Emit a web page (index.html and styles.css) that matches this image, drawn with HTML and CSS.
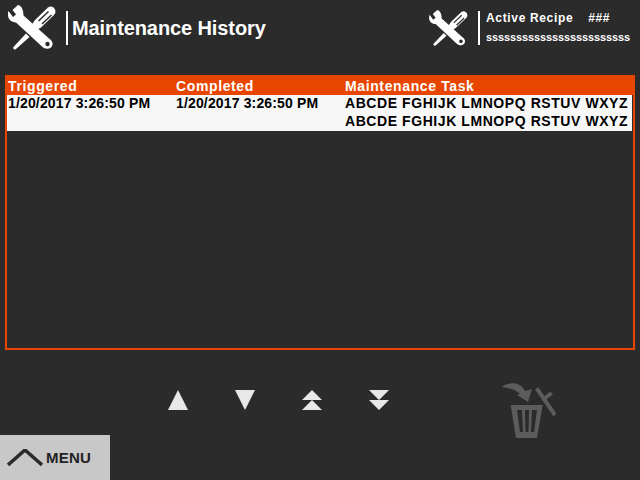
FILE: index.html
```html
<!DOCTYPE html>
<html lang="en">
<head>
    <meta charset="UTF-8">
    <title>Maintenance History</title>
    <link rel="stylesheet" href="styles.css">
</head>
<body>
    <svg class="icon-defs" width="0" height="0">
        <symbol id="tools" viewBox="8 5 48 46">
            <path class="tool" d="M18 5 L12.5 10 L16 14.500 L13 17 L8.500 11 C6.500 17 9.500 22 16 22.500 L42 46.500 C45 50 52 49.500 52.500 44.500 C53 42 51 40 49 38.500 L23.500 15.500 C23.500 9 21 5.500 18 5 Z"/>
            <circle class="hole" cx="47.500" cy="44" r="2.200"/>
            <path class="tool" d="M26 33.500 L29.500 37 L16 49 C14.500 50.500 12.500 48.500 13.500 47 Z"/>
            <path class="tool" d="M29.500 28 L35 20 L48 7.500 C50 6 52 6 54 8 C56 10.500 56 12.500 54 15 L41 27.500 L33 32 Z"/>
            <path class="slot" d="M38.500 21 L48.500 11.500 M42 24 L51.500 15"/>
        </symbol>
    </svg>

    <div class="header">
        <svg class="tools-big"><use href="#tools"/></svg>
        <div class="title">Maintenance History</div>
        <div class="recipe-box">
            <svg class="tools-small"><use href="#tools"/></svg>
            <div class="recipe">
                <div class="recipe-top"><span>Active Recipe</span><span>###</span></div>
                <div class="recipe-name">ssssssssssssssssssssssss</div>
            </div>
        </div>
    </div>

    <div class="history">
        <div class="row head">
            <div>Triggered</div>
            <div>Completed</div>
            <div>Maintenance Task</div>
        </div>
        <div class="row item">
            <div>1/20/2017 3:26:50 PM</div>
            <div>1/20/2017 3:26:50 PM</div>
            <div class="task">ABCDE FGHIJK LMNOPQ RSTUV WXYZ<br>ABCDE FGHIJK LMNOPQ RSTUV WXYZ</div>
        </div>
    </div>

    <div class="controls">
        <svg class="arrow" viewBox="0 0 20 20"><path d="M10 0 L20 20 L0 20 Z"/></svg>
        <svg class="arrow" viewBox="0 0 20 20"><path d="M0 0 L20 0 L10 20 Z"/></svg>
        <svg class="arrow" viewBox="0 0 20 20"><path d="M10 0 L20 10 L0 10 Z M10 10 L20 20 L0 20 Z"/></svg>
        <svg class="arrow" viewBox="0 0 20 20"><path d="M0 0 L20 0 L10 10 Z M0 10 L20 10 L10 20 Z"/></svg>
        <svg class="trash" viewBox="0 0 56 56">
            <path class="trash-fill" d="M1.700 5 C8 0 20 -1 25 9 L32 7 L28 20 L17 13 L20 12 C16 8 10 6 1.700 5 Z"/>
            <path class="trash-line" d="M36.700 6.300 L55 33 M45 16 L51.700 11"/>
            <path class="trash-fill" fill-rule="evenodd" d="M10.700 23 L42.700 23 L37 56 L16 56 Z M17 28 L20 50 L23 50 L22 28 Z M25 28 L25.500 50 L28.500 50 L29 28 Z M32 28 L31 50 L34 50 L37 28 Z"/>
        </svg>
    </div>

    <div class="menu">
        <svg class="menu-chevron" viewBox="0 0 36 18"><path d="M1 16 L18 1 L35 16"/></svg>
        <span>MENU</span>
    </div>
</body>
</html>
```

FILE: styles.css
```css
* {
    margin: 0;
    padding: 0;
    box-sizing: border-box;
    font-family: 'Liberation Sans', Arial, sans-serif;
}

body {
    width: 640px;
    height: 480px;
    background: #2b2b2b;
    overflow: hidden;
}

.icon-defs {
    position: absolute;
}

.tool {
    fill: #fff;
}

.hole {
    fill: #2b2b2b;
}

.slot {
    fill: none;
    stroke: #2b2b2b;
    stroke-width: 1.5;
}

.header {
    display: flex;
    align-items: flex-start;
    height: 75px;
    padding: 5px 10px 0 8px;
    color: #fff;
}

.tools-big {
    width: 48px;
    height: 46px;
}

.title {
    margin: 6px 0 0 10px;
    padding-left: 4px;
    height: 34px;
    border-left: 2px solid #fff;
    font-size: 20px;
    font-weight: bold;
    letter-spacing: -0.1px;
    line-height: 34px;
}

.recipe-box {
    display: flex;
    margin-left: auto;
}

.tools-small {
    width: 39px;
    height: 37px;
    margin-top: 5px;
}

.recipe {
    margin: 6px 0 0 10px;
    padding-left: 6px;
    height: 34px;
    border-left: 2px solid #fff;
}

.recipe-top {
    display: flex;
    gap: 15px;
    font-size: 12px;
    font-weight: bold;
    letter-spacing: 0.65px;
    line-height: 15px;
}

.recipe-name {
    margin-top: 4px;
    font-size: 11px;
    font-weight: bold;
    letter-spacing: -0.12px;
    line-height: 14px;
}

.history {
    height: 275px;
    margin: 0 5px;
    border: 2px solid #e84600;
}

.row {
    display: grid;
    grid-template-columns: 168px 169px 1fr;
    padding-left: 1px;
    font-weight: bold;
}

.head {
    height: 18px;
    background: #e84600;
    color: #fff;
    font-size: 14px;
    letter-spacing: 0.62px;
    line-height: 19px;
}

.item {
    height: 36px;
    margin-right: 1px;
    background: #f7f7f7;
    color: #000;
    font-size: 14px;
    letter-spacing: 0.15px;
    line-height: 18px;
}

.item > div {
    margin-top: -1px;
}

.task {
    letter-spacing: 0.57px;
}

.controls {
    display: flex;
    align-items: flex-start;
    height: 85px;
    padding: 40px 0 0 168px;
    gap: 47px;
}

.arrow {
    width: 20px;
    height: 20px;
    fill: #e8e8e8;
}

.trash {
    flex: none;
    width: 56px;
    height: 56px;
    margin: -8px 0 0 64px;
}

.trash-fill {
    fill: #5c5c5c;
}

.trash-line {
    fill: none;
    stroke: #5c5c5c;
    stroke-width: 4;
}

.menu {
    display: flex;
    align-items: center;
    gap: 3px;
    width: 110px;
    height: 45px;
    padding-left: 7px;
    background: #c8c8c8;
    color: #222;
    font-size: 15px;
    font-weight: bold;
    letter-spacing: 0.2px;
}

.menu-chevron {
    width: 36px;
    height: 18px;
    fill: none;
    stroke: #2b2b2b;
    stroke-width: 3.5;
}
```
